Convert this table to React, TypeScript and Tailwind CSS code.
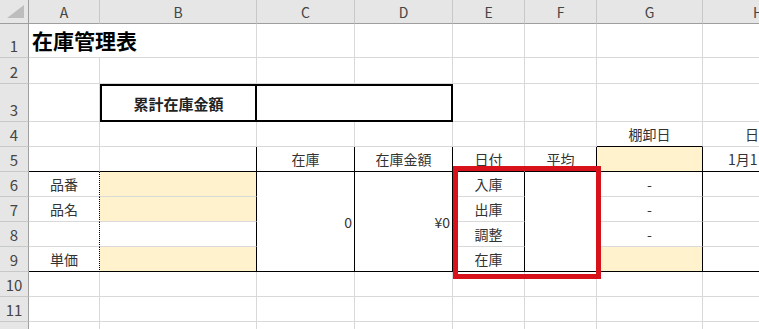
import type { ReactNode } from 'react'

// Excel-like sheet: 在庫管理表
// column edges: 0,29,100,257,355,453,525,597,703 / row edges: 0,24,58,84,122,147,172...

const COLS = ['A', 'B', 'C', 'D', 'E', 'F', 'G', 'H']

// border pieces (always full class names)
const R = 'border-r border-r-[#d9d9d9]'
const RK = 'border-r border-r-black'
const RD = 'border-r border-r-black [border-right-style:dotted]'
const B = 'border-b border-b-[#d9d9d9]'
const BK = 'border-b border-b-black'
const YEL = 'bg-[#fff2cc]'

function Cell({
  cls = '',
  align = 'center',
  children,
}: {
  cls?: string
  align?: 'center' | 'right' | 'left'
  children?: ReactNode
}) {
  const j = align === 'right' ? 'justify-end pr-[2px]' : align === 'left' ? 'justify-start' : 'justify-center'
  return (
    <div className={`flex items-center whitespace-nowrap text-[14px] leading-none text-[#333] ${j} ${cls}`}>
      {children}
    </div>
  )
}

function RowHead({ n }: { n?: number }) {
  return (
    <div className="flex items-end justify-center pb-[4px] bg-[#e6e6e6] border-r border-b border-r-[#9e9e9e] border-b-[#c8c8c8] text-[15px] leading-none text-[#444]">
      {n}
    </div>
  )
}

// a plain row of empty gridline cells
function EmptyRow({ n }: { n?: number }) {
  return (
    <>
      <RowHead n={n} />
      {COLS.map((c) => (
        <Cell key={c} cls={`${R} ${B}`} />
      ))}
    </>
  )
}

export default function App() {
  return (
    <div className="relative w-[759px] h-[329px] overflow-hidden bg-white font-['Noto_Sans_CJK_JP','Liberation_Sans',sans-serif]">
      <div className="grid w-[814px] grid-cols-[29px_71px_157px_98px_98px_72px_72px_106px_111px] grid-rows-[24px_34px_26px_38px_25px_25px_25px_25px_25px_25px_25px_25px_25px]">
        {/* column headers */}
        <div className="bg-[#e6e6e6] border-r border-b border-r-[#9e9e9e] border-b-[#9e9e9e] flex items-start justify-end pt-[5px] pr-[3px]">
          <svg width="18" height="14" viewBox="0 0 18 14">
            <polygon points="17,0 17,13 0,13" fill="#bdbdbd" />
          </svg>
        </div>
        {COLS.map((c) => (
          <div
            key={c}
            className="flex items-center justify-center bg-[#e6e6e6] border-r border-b border-r-[#c8c8c8] border-b-[#9e9e9e] text-[14px] leading-none text-[#444]"
          >
            {c}
          </div>
        ))}

        {/* row 1 */}
        <RowHead n={1} />
        <Cell cls={B} align="left">
          <span className="pl-[3px] text-[21px] font-bold text-black">在庫管理表</span>
        </Cell>
        <Cell cls={`${R} ${B}`} />
        <Cell cls={`${R} ${B}`} />
        <Cell cls={`${R} ${B}`} />
        <Cell cls={`${R} ${B}`} />
        <Cell cls={`${R} ${B}`} />
        <Cell cls={`${R} ${B}`} />
        <Cell cls={`${R} ${B}`} />

        {/* row 2 */}
        <EmptyRow n={2} />

        {/* row 3 */}
        <RowHead n={3} />
        <Cell cls={`${R} ${B}`} />
        <Cell cls="border-2 border-black">
          <span className="text-[15px] font-semibold text-[#222]">累計在庫金額</span>
        </Cell>
        <Cell cls="col-span-2 border-t-2 border-r-2 border-b-2 border-black" />
        <Cell cls={`${R} ${B}`} />
        <Cell cls={`${R} ${B}`} />
        <Cell cls={`${R} ${B}`} />
        <Cell cls={`${R} ${B}`} />

        {/* row 4 */}
        <RowHead n={4} />
        <Cell cls={`${R} ${B}`} />
        <Cell cls={`${R} ${B}`} />
        <Cell cls={`${R} ${B}`} />
        <Cell cls={`${R} ${B}`} />
        <Cell cls={`${R} ${B}`} />
        <Cell cls={`${R} ${B}`} />
        <Cell cls={`${R} ${BK}`}>棚卸日</Cell>
        <Cell cls={`${R} ${B}`} align="left">
          <span className="pl-[42px]">日</span>
        </Cell>

        {/* row 5 */}
        <RowHead n={5} />
        <Cell cls={`${R} ${BK}`} />
        <Cell cls={`${RK} ${BK}`} />
        <Cell cls={`${RK} ${BK}`}>在庫</Cell>
        <Cell cls={`${RK} ${BK}`}>在庫金額</Cell>
        <Cell cls={`${R} ${BK}`}>日付</Cell>
        <Cell cls={`${RK} ${BK}`}>平均</Cell>
        <Cell cls={`${RK} ${BK} ${YEL}`} />
        <Cell cls={`${R} ${BK}`} align="left">
          <span className="pl-[25px]">1月1日</span>
        </Cell>

        {/* rows 6-9 */}
        <RowHead n={6} />
        <Cell cls={`${RD} ${B}`}>品番</Cell>
        <Cell cls={`${RK} ${B} ${YEL}`} />
        <Cell cls={`row-span-4 ${RK} ${BK}`} align="right">0</Cell>
        <Cell cls={`row-span-4 ${RK} ${BK}`} align="right">¥0</Cell>
        <Cell cls={`${RK} ${B}`}>入庫</Cell>
        <Cell cls={`row-span-4 ${RK} ${BK}`} />
        <Cell cls={`${RK} ${B}`}>-</Cell>
        <Cell cls={`${R} ${B}`} />

        <RowHead n={7} />
        <Cell cls={`${RD} ${B}`}>品名</Cell>
        <Cell cls={`${RK} ${B} ${YEL}`} />
        <Cell cls={`${RK} ${B}`}>出庫</Cell>
        <Cell cls={`${RK} ${B}`}>-</Cell>
        <Cell cls={`${R} ${B}`} />

        <RowHead n={8} />
        <Cell cls={`${RD} ${B}`} />
        <Cell cls={`${RK} ${B}`} />
        <Cell cls={`${RK} ${B}`}>調整</Cell>
        <Cell cls={`${RK} ${B}`}>-</Cell>
        <Cell cls={`${R} ${B}`} />

        <RowHead n={9} />
        <Cell cls={`${RD} ${BK}`}>単価</Cell>
        <Cell cls={`${RK} ${BK} ${YEL}`} />
        <Cell cls={`${RK} ${BK}`}>在庫</Cell>
        <Cell cls={`${RK} ${BK} ${YEL}`} />
        <Cell cls={`${R} ${BK}`} />

        <EmptyRow n={10} />
        <EmptyRow n={11} />
        {/* row 12 is only a sliver at the bottom edge */}
        <EmptyRow />
      </div>

      {/* red highlight annotation */}
      <div className="absolute left-[453px] top-[166px] w-[148px] h-[113px] border-[5px] border-[#d8121b]" />
    </div>
  )
}
